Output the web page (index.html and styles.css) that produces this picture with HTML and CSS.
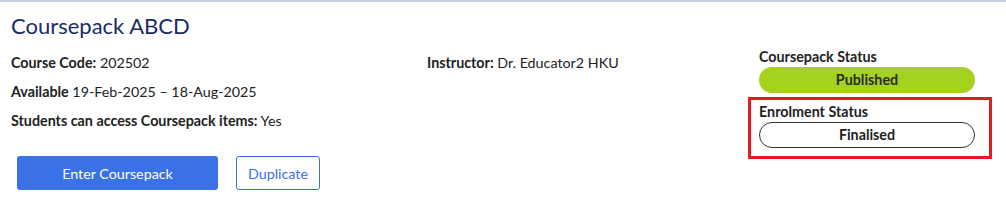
FILE: index.html
```html
<!DOCTYPE html>
<html>
<head>
    <link rel="stylesheet" href="styles.css">
</head>
<body>
    <div class="card">
        <h1 class="title">Coursepack ABCD</h1>
        <div class="details">
            <div class="info">
                <div class="info-row"><b>Course Code:</b> 202502</div>
                <div class="info-row"><b>Available</b> 19-Feb-2025 &ndash; 18-Aug-2025</div>
                <div class="info-row"><b>Students can access Coursepack items:</b> Yes</div>
            </div>
            <div class="info">
                <div class="info-row"><b>Instructor:</b> Dr. Educator2 HKU</div>
            </div>
            <div class="status">
                <div class="status-group">
                    <div class="status-label">Coursepack Status</div>
                    <div class="pill pill-published">Published</div>
                </div>
                <div class="status-group highlight">
                    <div class="status-label">Enrolment Status</div>
                    <div class="pill pill-final">Finalised</div>
                </div>
            </div>
        </div>
        <div class="actions">
            <button class="btn btn-primary">Enter Coursepack</button>
            <button class="btn btn-outline">Duplicate</button>
        </div>
    </div>
</body>
</html>
```

FILE: styles.css
```css
body {
    margin: 0;
    font-family: Lato, "Open Sans", sans-serif;
    color: #222;
    background: #fff;
}
.card {
    border-top: 2px solid #c9d3e4;
    padding: 11px 11px 0 11px;
}
.title {
    margin: 0;
    font-size: 22px;
    font-weight: 400;
    color: #1b2b66;
    line-height: 26px;
}
.details {
    display: grid;
    grid-template-columns: 416px 322px 244px;
    margin-top: 15px;
}
.info-row {
    font-size: 14.3px;
    line-height: 18px;
    margin-bottom: 11px;
    height: 18px;
}
.info-row:nth-child(2) {
    margin-top: 2px;
}
.info-row b {
    font-weight: 700;
}
.status {
    display: flex;
    flex-direction: column;
    margin-top: -6px;
}
.status-group {
    padding: 0 16px 0 10px;
    width: 216px;
}
.status-label {
    font-size: 14.3px;
    font-weight: 700;
    line-height: 18px;
}
.pill {
    height: 26px;
    line-height: 26px;
    border-radius: 13px;
    text-align: center;
    font-size: 14.3px;
    font-weight: 700;
    box-sizing: border-box;
}
.pill-published {
    background: #a4d21e;
    color: #2b2b2b;
    margin-top: 1px;
}
.highlight {
    border: 3px solid #e31b23;
    padding: 3px 14px 8px 8px;
    margin-top: 4px;
    margin-left: -1px;
}
.pill-final {
    border: 1px solid #333;
    line-height: 24px;
    margin-top: 1px;
}
.actions {
    display: flex;
    gap: 18px;
    padding-left: 6px;
    margin-top: -3px;
}
.btn {
    font-family: Lato, "Open Sans", sans-serif;
    font-size: 14.3px;
    height: 34px;
    border-radius: 3px;
    cursor: pointer;
}
.btn-primary {
    background: #3a71e6;
    color: #fff;
    border: none;
    width: 201px;
}
.btn-outline {
    background: #fff;
    color: #3a71e6;
    border: 1px solid #3a71e6;
    width: 84px;
}
```
